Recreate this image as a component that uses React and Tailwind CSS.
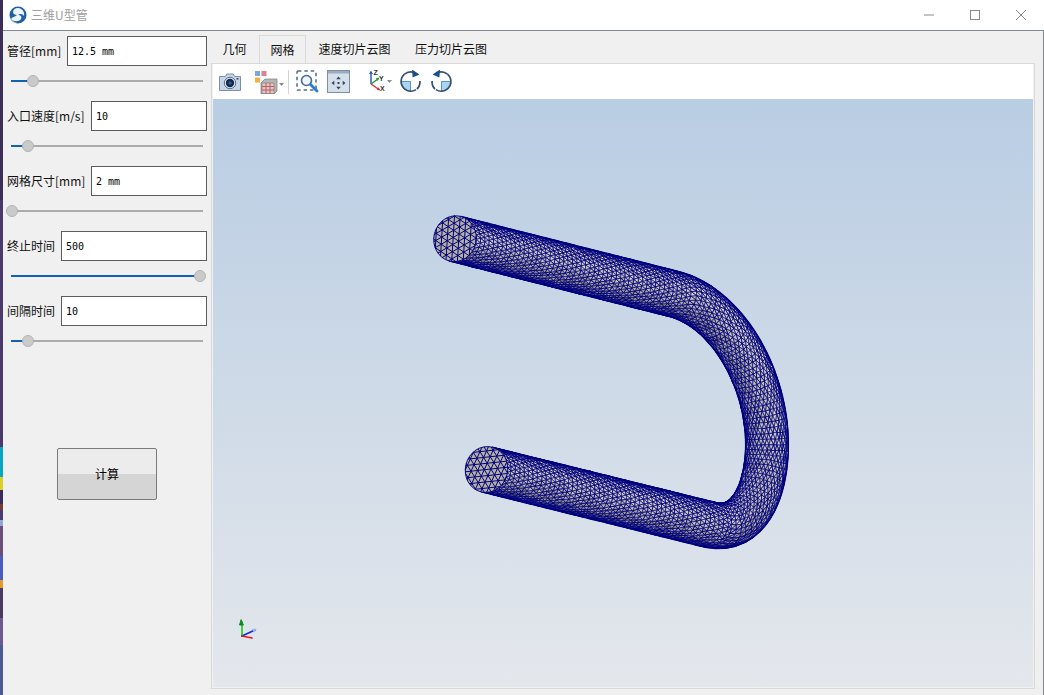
import React from "react";

const cjk = { fontFamily: '"Noto Sans CJK SC", "Noto Sans", sans-serif' };

/* ---------- tube mesh ---------- */
function bez(a, b, c, d, t) {
  const m = 1 - t;
  return [
    m * m * m * a[0] + 3 * m * m * t * b[0] + 3 * m * t * t * c[0] + t * t * t * d[0],
    m * m * m * a[1] + 3 * m * m * t * b[1] + 3 * m * t * t * c[1] + t * t * t * d[1],
  ];
}
function hash(n) {
  const x = Math.sin(n * 127.1 + 11.7) * 43758.5453;
  return x - Math.floor(x) - 0.5;
}
function buildMesh() {
  const A = [455, 238.7], B = [674, 294], C = [767, 445], D = [708, 524.3], E = [486.5, 469.5];
  const dense = [];
  for (let i = 0; i < 200; i++) dense.push({ p: [A[0] + (B[0] - A[0]) * i / 200, A[1] + (B[1] - A[1]) * i / 200], z: 0 });
  for (let i = 0; i < 200; i++) dense.push({ p: bez(B, [725, 307], [767, 375], C, i / 200), z: 1, q: i / 400 });
  for (let i = 0; i < 200; i++) dense.push({ p: bez(C, [767, 488], [750, 535], D, i / 200), z: 1, q: 0.5 + i / 400 });
  for (let i = 0; i <= 200; i++) dense.push({ p: [D[0] + (E[0] - D[0]) * i / 200, D[1] + (E[1] - D[1]) * i / 200], z: 2 });

  const rings = [];
  let acc = 99;
  for (let i = 0; i < dense.length; i++) {
    if (i > 0) acc += Math.hypot(dense[i].p[0] - dense[i - 1].p[0], dense[i].p[1] - dense[i - 1].p[1]);
    const d = dense[i];
    const step = d.z === 1 ? 5.6 : 3.7;
    if (acc >= step || i === dense.length - 1) {
      acc = 0;
      const a = dense[Math.max(0, i - 2)].p, b = dense[Math.min(dense.length - 1, i + 2)].p;
      const l = Math.hypot(b[0] - a[0], b[1] - a[1]);
      const T = [(b[0] - a[0]) / l, (b[1] - a[1]) / l];
      const N = [-T[1], T[0]];
      const k = d.z === 0 ? 0.92 : d.z === 2 ? -0.92 : 0.92 - 1.84 * d.q;
      const r = d.z === 1 ? 23 - 1.6 * Math.sin(d.q * Math.PI) : 23;
      rings.push({ c: d.p, T, N, k, r });
    }
  }
  const SEG = 16;
  const pt = (ri, j, off) => {
    const R = rings[ri];
    const ang = -Math.PI / 2 + (Math.PI * Math.min(SEG, Math.max(0, j + off))) / SEG;
    const u = Math.sin(ang), v = Math.cos(ang);
    const jit = j > 0 && j < SEG ? 0.8 : 0;
    return {
      x: R.c[0] + R.N[0] * R.r * u + R.T[0] * R.k * R.r * v + jit * hash(ri * 31 + j),
      y: R.c[1] + R.N[1] * R.r * u + R.T[1] * R.k * R.r * v + jit * hash(ri * 17 + j * 7 + 3),
      u, ny: R.N[1] * u, nx: R.N[0] * u,
    };
  };
  const buckets = [[], [], [], [], []];
  const tri = (a, b, c) => {
    const nx = (a.nx + b.nx + c.nx) / 3, ny = (a.ny + b.ny + c.ny) / 3;
    const s = 0.58 - 0.62 * ny + 0.22 * nx + 0.25 * hash(a.x * 3.1 + c.y);
    const idx = Math.max(0, Math.min(4, Math.floor(s * 5)));
    buckets[idx].push(`M${a.x.toFixed(1)} ${a.y.toFixed(1)}L${b.x.toFixed(1)} ${b.y.toFixed(1)}L${c.x.toFixed(1)} ${c.y.toFixed(1)}Z`);
  };
  for (let i = 0; i < rings.length - 1; i++) {
    const o1 = i % 2 ? 0.5 : 0, o2 = i % 2 ? 0 : 0.5;
    for (let j = 0; j < SEG; j++) {
      const a = pt(i, j, o1), b = pt(i, j + 1, o1), c = pt(i + 1, j, o2), d = pt(i + 1, j + 1, o2);
      if (i % 2) { tri(a, c, d); tri(a, d, b); } else { tri(a, c, b); tri(b, c, d); }
    }
  }
  const edge = (sign) => rings.map((R) => `${(R.c[0] + sign * R.N[0] * R.r).toFixed(1)} ${(R.c[1] + sign * R.N[1] * R.r).toFixed(1)}`);
  const outline = `M${edge(1).join("L")}M${edge(-1).join("L")}`;

  /* end caps: triangular lattice clipped to the disc */
  const cap = (R) => {
    const parts = [];
    const map = (x, y) => [
      R.c[0] + R.N[0] * R.r * x + R.T[0] * R.k * R.r * y,
      R.c[1] + R.N[1] * R.r * x + R.T[1] * R.k * R.r * y,
    ];
    [0.2, 0.2 + Math.PI / 3, 0.2 + (2 * Math.PI) / 3].forEach((th, n) => {
      const dx = Math.cos(th), dy = Math.sin(th);
      for (let o = -0.9 + n * 0.09; o < 1; o += 0.27) {
        const h = Math.sqrt(1 - o * o);
        const a = map(-dy * o - dx * h, dx * o - dy * h);
        const b = map(-dy * o + dx * h, dx * o + dy * h);
        parts.push(`M${a[0].toFixed(1)} ${a[1].toFixed(1)}L${b[0].toFixed(1)} ${b[1].toFixed(1)}`);
      }
    });
    return { d: parts.join(""), R };
  };
  return {
    buckets: buckets.map((b) => b.join("")),
    outline,
    caps: [cap(rings[0]), cap(rings[rings.length - 1])],
  };
}
const mesh = buildMesh();
const SHADES = ["#85837c", "#9d9b93", "#b5b2a8", "#c9c6b9", "#d8d5c8"];

function Tube() {
  return (
    <svg className="block w-[820px] h-[588px]" viewBox="213 99 820 588">
      {mesh.buckets.map((d, i) => (
        <path key={i} d={d} fill={SHADES[i]} stroke="#00007f" strokeWidth="0.68" strokeLinejoin="round" />
      ))}
      <path d={mesh.outline} fill="none" stroke="#00007f" strokeWidth="1.3" />
      {mesh.caps.map(({ d, R }, i) => {
        const deg = (Math.atan2(R.N[1], R.N[0]) * 180) / Math.PI;
        return (
          <g key={i}>
            <ellipse
              cx={R.c[0]} cy={R.c[1]} rx={R.r} ry={Math.abs(R.k) * R.r}
              transform={`rotate(${deg} ${R.c[0]} ${R.c[1]})`}
              fill="#b3b0a6" stroke="#00007f" strokeWidth="0.9"
            />
            <path d={d} fill="none" stroke="#00007f" strokeWidth="1" />
          </g>
        );
      })}
      {/* orientation marker */}
      <g fill="none" strokeLinecap="round">
        <path d="M242 636L242 622" stroke="#10d010" strokeWidth="1.6" />
        <path d="M241 620l-1.500 5h3.500z" fill="#0a8a20" stroke="#0a8a20" />
        <path d="M242 636L255 630" stroke="#1030e0" strokeWidth="1.8" />
        <path d="M242 636L252 638" stroke="#e81818" strokeWidth="1.6" />
        <path d="M256 629l-4 0 2 3z" fill="#a8b4f0" stroke="#a8b4f0" strokeWidth="0.5" />
      </g>
    </svg>
  );
}

/* ---------- toolbar icons ---------- */
const Camera = () => (
  <svg width="24" height="20" viewBox="0 0 24 20">
    <path d="M1.500 4.500h6l1.200-2.500h6.600l1.200 2.500h6v14h-21z" fill="#c6d6e8" stroke="#7d90a6" />
    <circle cx="12" cy="11" r="5.700" fill="#e3ecf6" stroke="#5a6d85" />
    <circle cx="12" cy="11" r="4.200" fill="#13294a" />
    <circle cx="12" cy="11" r="1.700" fill="#2f5a92" />
    <rect x="18.500" y="6" width="2" height="1.600" fill="#3c506a" />
  </svg>
);
const ColorCube = () => (
  <svg width="30" height="24" viewBox="0 0 30 24">
    <rect x="1" y="1" width="5" height="5" fill="#7aa7dc" />
    <rect x="7.500" y="1" width="5" height="5" fill="#d9848a" />
    <rect x="1" y="7.500" width="5" height="5" fill="#f0b040" />
    <path d="M7 13l4-4h12v12l-3 3H7z" fill="#b6b6b6" stroke="#7c7c7c" strokeWidth="0.7" />
    <rect x="8" y="13" width="12" height="10.500" fill="#e0c8c8" stroke="#8c6464" strokeWidth="0.6" />
    <path d="M12 13v10.500M16 13v10.500M8 16.500h12M8 20h12" stroke="#b04a4a" strokeWidth="0.8" />
    <path d="M25 13h5l-2.500 3z" fill="#8a8a8a" />
  </svg>
);
const ZoomBox = () => (
  <svg width="23" height="23" viewBox="0 0 23 23">
    <rect x="1" y="1" width="19" height="19" rx="1" fill="none" stroke="#53688a" strokeWidth="1.5" strokeDasharray="3.4 3" />
    <circle cx="10.500" cy="10.500" r="5" fill="#eef5fc" stroke="#4a6a92" strokeWidth="1.6" />
    <path d="M14.500 14.500L21 21" stroke="#2a7fd0" strokeWidth="2.800" strokeLinecap="round" />
  </svg>
);
const FitView = () => (
  <svg width="23" height="23" viewBox="0 0 23 23">
    <rect x="0.500" y="0.500" width="22" height="22" fill="#d5dfea" stroke="#7d8fa3" />
    <rect x="1" y="1" width="21" height="2.500" fill="#9aacbf" />
    <path d="M11.500 6.500l-2.300 2.800h4.600zM11.500 19.500l-2.300-2.800h4.600zM4.500 13l2.800-2.300v4.600zM18.500 13l-2.800-2.300v4.600z" fill="#33475e" />
    <rect x="10.500" y="12" width="2" height="2" fill="#33475e" />
  </svg>
);
const Axes = () => (
  <svg width="27" height="25" viewBox="0 0 27 25">
    <path d="M5 15V4" stroke="#2460c0" strokeWidth="1.500" />
    <path d="M5 1.500l-2 3.500h4z" fill="#2460c0" />
    <path d="M5 15l7-5" stroke="#1d9a3a" strokeWidth="1.500" />
    <path d="M13.500 8.500l-3.700.8 2 2.600z" fill="#1d9a3a" />
    <path d="M5 15l8 5.500" stroke="#e03030" strokeWidth="1.500" />
    <path d="M14.500 21.500l-3.700-.6 1.800-2.700z" fill="#e03030" />
    <text x="7.500" y="5.500" fontSize="7" fontWeight="700" fill="#333" fontFamily="Liberation Sans">Z</text>
    <text x="13" y="12" fontSize="7" fontWeight="700" fill="#333" fontFamily="Liberation Sans">Y</text>
    <text x="14" y="22" fontSize="7" fontWeight="700" fill="#333" fontFamily="Liberation Sans">X</text>
    <path d="M21 11h5l-2.500 3z" fill="#8a8a8a" />
  </svg>
);
const Rotate = ({ flip }) => (
  <svg width="23" height="23" viewBox="0 0 23 23" style={flip ? { transform: "scaleX(-1)" } : undefined}>
    <path d="M2 11.500h9.500V21A9.500 9.500 0 0 1 2 11.500z" fill="#a9d4f2" stroke="#3e7fb8" strokeWidth="0.8" />
    <path d="M5.500 4.200a9.600 9.600 0 0 0 0 14.600 9.600 9.600 0 0 0 11.500.8" fill="none" stroke="#33506f" strokeWidth="1.700" />
    <path d="M5.500 4.200A9.600 9.600 0 0 1 16 3" fill="none" stroke="#33506f" strokeWidth="1.700" />
    <path d="M20.500 4.500l-7.500-5 .6 8z" fill="#1c4f8a" />
    <path d="M20.900 11a9.400 9.400 0 0 1-3 8" fill="none" stroke="#33506f" strokeWidth="1.700" />
  </svg>
);

/* ---------- controls ---------- */
function Slider({ pos }) {
  return (
    <div className="h-[35px] pt-[14px] pl-[8px]">
      <div className="relative w-[192px] h-[2px] bg-[#ababab]">
        <div className="absolute left-0 top-0 h-[2px] bg-[#0f62b5]" style={{ width: pos }} />
        <div
          className="absolute top-[-5px] w-[12px] h-[12px] rounded-full bg-[#cacaca] border border-[#b2b2b2]"
          style={{ left: pos - 6 }}
        />
      </div>
    </div>
  );
}

function Field({ label, value, width, pos }) {
  return (
    <>
      <div className="flex items-center justify-between w-[200px] h-[30px] ml-[4px]">
        <span className="text-[12px] text-[#111] whitespace-nowrap" style={cjk}>{label}</span>
        <div
          className="h-[30px] bg-white border border-[#5c5c5c] flex items-center pl-[4px] text-[10px] text-black"
          style={{ width, fontFamily: '"DejaVu Sans Mono", monospace' }}
        >
          {value}
        </div>
      </div>
      <Slider pos={pos} />
    </>
  );
}

function Tab({ children, active, className = "" }) {
  return (
    <div
      className={`flex items-center justify-center h-[28px] text-[12px] text-[#111] ${
        active ? "border border-b-0 border-[#d9d9d9] bg-[#f0f0f0]" : ""
      } ${className}`}
      style={cjk}
    >
      {children}
    </div>
  );
}

function Logo() {
  return (
    <svg width="18" height="18" viewBox="0 0 18 18">
      <circle cx="9" cy="9" r="8.500" fill="#1f5fa8" />
      <path d="M2 13C5 16 10 16 12 13c1.500-2.500-1-4-3-4 2-2 5-1 6 1 1-4-2-8-6-8C6 2 4 4 4 6c0 2 2 3 4 3-2 2-5 2-6 4z" fill="#eef4fb" />
      <path d="M1 11c1 4 4 6.500 8 6.500-3-1-6-3-8-6.500z" fill="#9fc1e6" />
    </svg>
  );
}

const WALL = [
  ["#3b2f58", 200], ["#4a3a6c", 247], ["#06a6c4", 30], ["#d8d028", 13], ["#3c2c5a", 14],
  ["#7a3a30", 6], ["#4a3c70", 10], ["#8fa8d8", 6], ["#6a5078", 30], ["#4a5cc0", 24],
  ["#e09a30", 8], ["#4a3a60", 30], ["#6a5a90", 27], ["#4a5a96", 50],
];

export default function App() {
  return (
    <div className="flex w-[1044px] h-[695px] overflow-hidden bg-[#f0f0f0]" style={cjk}>
      <div className="flex flex-col w-[3px] shrink-0">
        {WALL.map(([c, h], i) => (
          <div key={i} style={{ background: c, height: h }} />
        ))}
      </div>

      <div className="flex flex-col flex-1 min-w-0">
        {/* title bar */}
        <div className="flex items-center h-[30px] bg-white shrink-0">
          <div className="ml-[6px] mr-[4px]"><Logo /></div>
          <span className="text-[12px] text-[#a0a0a0]">三维U型管</span>
          <div className="flex ml-auto h-full">
            <div className="w-[46px] flex items-center justify-center">
              <svg width="10" height="10" viewBox="0 0 10 10"><path d="M0 5h10" stroke="#8a8a8a" /></svg>
            </div>
            <div className="w-[46px] flex items-center justify-center">
              <svg width="10" height="10" viewBox="0 0 10 10"><rect x="0.5" y="0.5" width="9" height="9" fill="none" stroke="#8a8a8a" /></svg>
            </div>
            <div className="w-[46px] flex items-center justify-center">
              <svg width="10" height="10" viewBox="0 0 10 10"><path d="M0 0l10 10M10 0L0 10" stroke="#8a8a8a" /></svg>
            </div>
          </div>
        </div>

        {/* body */}
        <div className="flex flex-1 min-h-0 border-t border-r border-[#808890]">
          <div className="w-[208px] shrink-0 pt-[5px]">
            <Field label="管径[mm]" value="12.5 mm" width={140} pos={22} />
            <Field label="入口速度[m/s]" value="10" width={116} pos={17} />
            <Field label="网格尺寸[mm]" value="2 mm" width={116} pos={1} />
            <Field label="终止时间" value="500" width={146} pos={189} />
            <Field label="间隔时间" value="10" width={146} pos={17} />
            <button
              className="block mt-[87px] ml-[54px] w-[100px] h-[52px] rounded-[2px] border border-[#7a7a7a] text-[12px] text-black bg-[linear-gradient(#ececec_50%,#d5d5d5_50%)]"
              style={cjk}
            >
              计算
            </button>
          </div>

          <div className="flex flex-col w-[824px] shrink-0 pt-[4px]">
            <div className="flex h-[28px] shrink-0">
              <Tab className="w-[47px] mr-px">几何</Tab>
              <Tab active className="w-[47px]">网格</Tab>
              <Tab className="w-[97px]">速度切片云图</Tab>
              <Tab className="w-[96px]">压力切片云图</Tab>
            </div>
            <div className="flex flex-col h-[626px] border border-[#d9d9d9] pl-px pr-px pb-px">
              <div className="flex items-center h-[35px] bg-white shrink-0">
                <div className="ml-[5px]"><Camera /></div>
                <div className="ml-[12px]"><ColorCube /></div>
                <div className="ml-[4px] w-px h-[24px] bg-[#d4d4d4]" />
                <div className="ml-[7px]"><ZoomBox /></div>
                <div className="ml-[8px]"><FitView /></div>
                <div className="ml-[16px]"><Axes /></div>
                <div className="ml-[6px]"><Rotate /></div>
                <div className="ml-[8px]"><Rotate flip /></div>
              </div>
              <div className="h-[588px] bg-[linear-gradient(#b9cde3,#e4e7ec)]">
                <Tube />
              </div>
            </div>
          </div>
        </div>
      </div>
    </div>
  );
}
